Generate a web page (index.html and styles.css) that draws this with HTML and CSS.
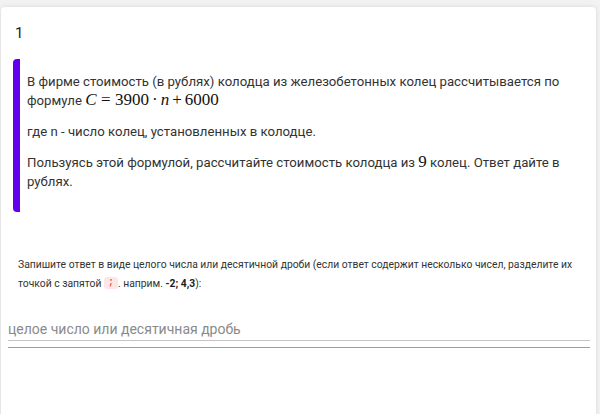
FILE: index.html
```html
<!DOCTYPE html>
<html lang="ru">
<head>
<meta charset="utf-8">
<link rel="stylesheet" href="styles.css">
</head>
<body>
<div class="card">
  <div class="num">1</div>
  <div class="quote">
    <p>В фирме стоимость (в рублях) колодца из железобетонных колец рассчитывается по формуле <span class="math"><i>C</i><span class="rel">=</span>3900<span class="bin">·</span><i>n</i><span class="bin">+</span>6000</span></p>
    <p>где n - число колец, установленных в колодце.</p>
    <p>Пользуясь этой формулой, рассчитайте стоимость колодца из <span class="math">9</span> колец. Ответ дайте в рублях.</p>
  </div>
  <div class="hint">Запишите ответ в виде целого числа или десятичной дроби (если ответ содержит несколько чисел, разделите их точкой с запятой <code class="chip">;</code>. наприм. <b>-2; 4,3</b>):</div>
  <div class="answer">
    <input class="field" type="text" placeholder="целое число или десятичная дробь">
    <div class="rule"></div>
  </div>
</div>
</body>
</html>
```
FILE: styles.css
```css
html, body {
  margin: 0;
  padding: 0;
}
body {
  background: #f2f2f2;
  font-family: Roboto, "Noto Sans", sans-serif;
  color: #333;
  height: 414px;
  overflow: hidden;
}
.card {
  margin: 7px 0 0 1px;
  width: 595px;
  height: 420px;
  background: #fff;
  border-radius: 4px;
  box-shadow: 0 0 4px rgba(0,0,0,0.12);
}
.num {
  padding: 17px 14px 0;
  font-size: 15px;
  line-height: 18px;
  color: #222;
}
.quote {
  margin: 17px 20px 0 12px;
  border-left: 7px solid #6200ee;
  border-radius: 4px;
  padding: 12.5px 0 21.5px 7px;
  font-size: 13.2px;
  line-height: 19px;
  color: #333;
}
.quote p {
  margin: 0 0 12px;
}
.quote p:last-child {
  margin-bottom: 0;
}
.math {
  display: inline-block;
  vertical-align: top;
  height: 19px;
  margin-top: -1px;
  font-family: "Liberation Serif", "DejaVu Serif", serif;
  font-size: 17px;
  line-height: 19px;
  color: #111;
  white-space: nowrap;
}
.rel {
  margin: 0 4.5px;
}
.bin {
  margin: 0 3px;
}
.hint {
  margin: 43px 20px 0 17px;
  font-size: 10.35px;
  line-height: 19px;
  color: #333;
}
.chip {
  display: inline-block;
  vertical-align: top;
  margin-top: 3px;
  background: #fde6e6;
  color: #e53935;
  font-family: "Liberation Mono", monospace;
  font-size: 10px;
  line-height: 12px;
  height: 12px;
  padding: 0 4px;
  border-radius: 3px;
}
.hint b {
  font-weight: 700;
  color: #222;
}
.answer {
  margin: 19px 0 0 7px;
  width: 582px;
}
.field {
  display: block;
  box-sizing: border-box;
  width: 100%;
  height: 29px;
  margin: 0;
  padding: 5px 0 0 0;
  border: none;
  border-bottom: 1px solid #c4c4c4;
  font-family: Roboto, sans-serif;
  font-size: 14px;
  color: #333;
  background: transparent;
  outline: none;
}
.field::placeholder {
  color: #8a8a8a;
}
.rule {
  margin-top: 6px;
  border-top: 1px solid #9e9e9e;
}
```
